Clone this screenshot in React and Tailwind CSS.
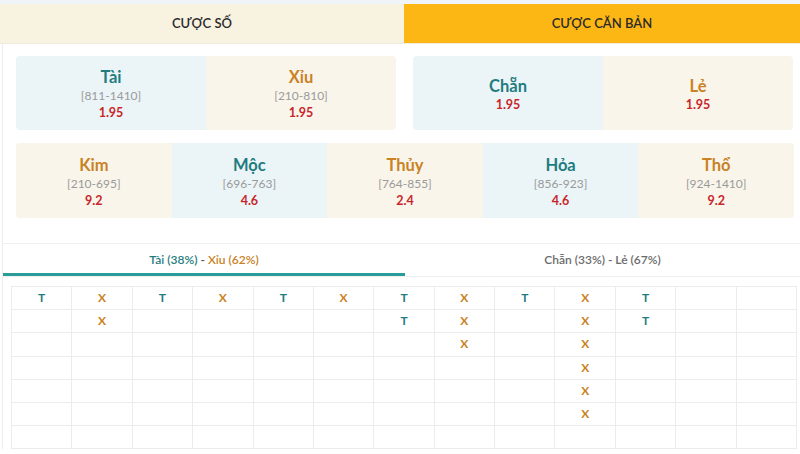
import React from 'react';

const teal = 'text-[#1f7c80]';
const orange = 'text-[#c98224]';

const ranges = [
  { name: 'Kim', range: '[210-695]', odds: '9.2', tone: 'cream' },
  { name: 'Mộc', range: '[696-763]', odds: '4.6', tone: 'blue' },
  { name: 'Thủy', range: '[764-855]', odds: '2.4', tone: 'cream' },
  { name: 'Hỏa', range: '[856-923]', odds: '4.6', tone: 'blue' },
  { name: 'Thổ', range: '[924-1410]', odds: '9.2', tone: 'cream' },
];

// each column top-down
const history = [
  ['T'], ['X', 'X'], ['T'], ['X'], ['T'], ['X'], ['T', 'T'],
  ['X', 'X', 'X'], ['T'], ['X', 'X', 'X', 'X', 'X', 'X'], ['T', 'T'], [], [],
];

function Cell({ name, range, odds, tone }) {
  const bg = tone === 'blue' ? 'bg-[#ebf4f7]' : 'bg-[#f9f5eb]';
  const color = tone === 'blue' ? teal : orange;
  return (
    <div className={`${bg} flex flex-col items-center justify-center pt-[2px]`}>
      <div className={`${color} text-[16.5px] font-bold leading-[20px]`}>{name}</div>
      {range && <div className="text-[#9a9a9a] text-[12px] leading-[16px] mt-[1px]">{range}</div>}
      <div className="text-[#c8262b] text-[12.5px] font-bold leading-[16px] mt-[1px]">{odds}</div>
    </div>
  );
}

export default function App() {
  const rows = [0, 1, 2, 3, 4, 5, 6];
  return (
    <div className="w-[800px] h-[454px] overflow-hidden bg-[#eef4f7] pt-[4px]" style={{ fontFamily: 'Lato, "Noto Sans", sans-serif' }}>
      <div className="bg-white h-full">
        <div className="flex h-[40px] border-b border-[#f1ece0]">
          <div className="w-[404px] bg-[#f8f2e0] flex items-center justify-center text-[13px] font-semibold text-[#2a2a2a]">CƯỢC SỐ</div>
          <div className="flex-1 bg-[#fdb714] flex items-center justify-center text-[13px] font-semibold text-[#2a2a2a]">CƯỢC CĂN BẢN</div>
        </div>

        <div className="ml-[2px] border-l border-[#ededed]">
          <div className="flex gap-[17px] pl-[13px] pr-[7px] pt-[12px]">
            <div className="flex-1 grid grid-cols-2 h-[74px] rounded-[4px] overflow-hidden">
              <Cell name="Tài" range="[811-1410]" odds="1.95" tone="blue" />
              <Cell name="Xỉu" range="[210-810]" odds="1.95" tone="cream" />
            </div>
            <div className="flex-1 grid grid-cols-2 h-[74px] rounded-[4px] overflow-hidden">
              <Cell name="Chẵn" odds="1.95" tone="blue" />
              <Cell name="Lẻ" odds="1.95" tone="cream" />
            </div>
          </div>

          <div className="pl-[13px] pr-[6px] pt-[13px]">
            <div className="grid grid-cols-5 h-[75px] rounded-[3px] overflow-hidden">
              {ranges.map((r) => (
                <Cell key={r.name} {...r} />
              ))}
            </div>
          </div>

          <div className="mt-[25px] border-t border-[#f0f0f0] flex h-[34px] border-b border-b-[#efefef]">
            <div className="w-[402px] flex items-center justify-center text-[12px] font-semibold border-b-[3px] border-[#2a9d9a] pt-[2px]">
              <span className={teal}>Tài (38%)</span>
              <span className="text-[#555] mx-[3px]">-</span>
              <span className={orange}>Xỉu (62%)</span>
            </div>
            <div className="flex-1 flex items-center justify-center text-[12px] font-semibold text-[#6b6b6b]">
              Chẵn (33%) - Lẻ (67%)
            </div>
          </div>

          <div className="ml-[8px] mr-[3px] mt-[9px] grid grid-cols-13 border-t border-l border-[#ececec]">
            {rows.map((r) =>
              history.map((col, c) => {
                const v = col[r];
                return (
                  <div key={`${r}-${c}`} className="h-[23.2px] border-r border-b border-[#ececec] flex items-center justify-center text-[12px] font-bold">
                    {v && <span className={v === 'T' ? teal : orange}>{v}</span>}
                  </div>
                );
              })
            )}
          </div>
        </div>
      </div>
    </div>
  );
}
